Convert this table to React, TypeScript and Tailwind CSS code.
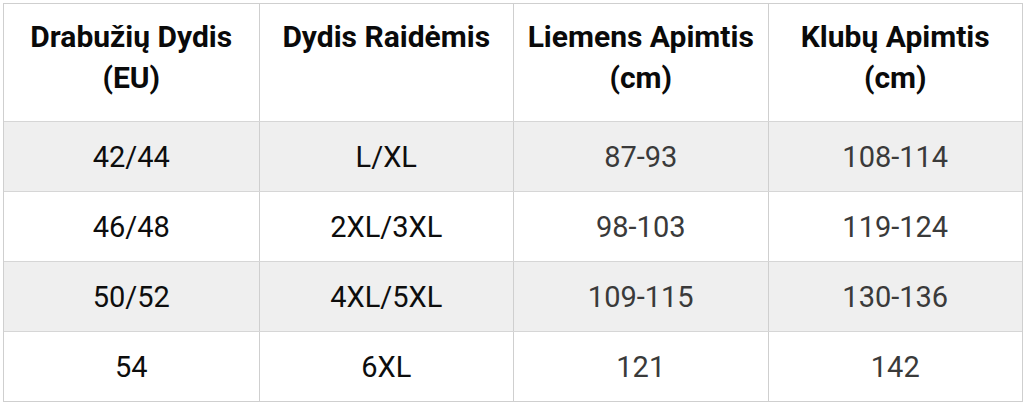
import React from "react";

const header = [
  ["Drabužių Dydis", "(EU)"],
  ["Dydis Raidėmis"],
  ["Liemens Apimtis", "(cm)"],
  ["Klubų Apimtis", "(cm)"],
];

const rows = [
  ["42/44", "L/XL", "87-93", "108-114"],
  ["46/48", "2XL/3XL", "98-103", "119-124"],
  ["50/52", "4XL/5XL", "109-115", "130-136"],
  ["54", "6XL", "121", "142"],
];

export default function App() {
  return (
    <div className="w-[1024px] h-[407px] bg-white" style={{ fontFamily: "Roboto, 'Liberation Sans', sans-serif" }}>
      <div className="ml-[3px] pt-[3px]">
        <div className="w-[1020px] border border-[#cfcfcf]">
          <div className="grid grid-cols-4 h-[117px] bg-white">
            {header.map((h, i) => (
              <div
                key={i}
                className={`flex flex-col items-center pt-[12px] text-[30px] leading-[41px] font-bold text-[#0a0a0a] ${i > 0 ? "border-l border-[#cfcfcf]" : ""}`}
              >
                {h.map((l, j) => (
                  <span key={j}>{l}</span>
                ))}
              </div>
            ))}
          </div>
          {rows.map((r, ri) => (
            <div
              key={ri}
              className={`grid grid-cols-4 h-[70px] border-t border-[#d6d6d6] ${ri % 2 === 0 ? "bg-[#efefef]" : "bg-white"}`}
            >
              {r.map((c, ci) => (
                <div
                  key={ci}
                  className={`flex items-center justify-center pt-[3px] text-[29px] ${ci < 2 ? "text-[#0d0d0d]" : "text-[#3a3a3a]"} ${ci > 0 ? "border-l border-[#cfcfcf]" : ""}`}
                >
                  {c}
                </div>
              ))}
            </div>
          ))}
        </div>
      </div>
    </div>
  );
}
